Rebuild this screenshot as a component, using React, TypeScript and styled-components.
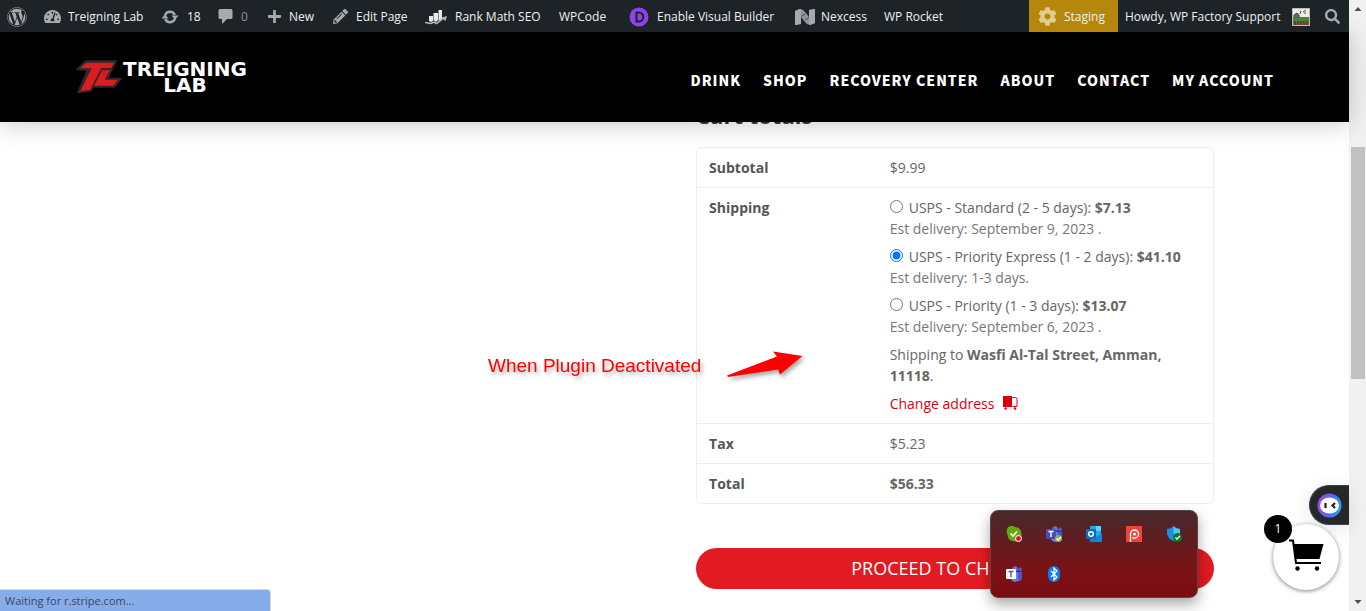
import React from "react";
import styled, { createGlobalStyle } from "styled-components";
import { FaWordpress, FaTachometerAlt, FaPlus, FaSearch, FaCog, FaPencilAlt } from "react-icons/fa";

const Global = createGlobalStyle`
  * { box-sizing: border-box; }
  body { margin: 0; background: #fff; overflow: hidden; font-family: "Open Sans", sans-serif; }
`;

const Window = styled.div`
  display: flex;
  height: 100vh;
  overflow: hidden;
`;
const Page = styled.div`
  flex: 1;
  min-width: 0;
  display: flex;
  flex-direction: column;
`;

/* Admin bar */
const AdminBar = styled.nav`
  display: flex;
  flex: none;
  height: 32px;
  background: #1d2327;
  font: 12px/30px "Open Sans", sans-serif;
  position: relative;
  z-index: 3;
`;
const AdminItem = styled.a<{ $w: number; $dim?: boolean; $gold?: boolean }>`
  display: flex;
  align-items: center;
  flex: none;
  width: ${(p) => p.$w}px;
  padding-left: 7px;
  padding-top: 1px;
  white-space: nowrap;
  text-decoration: none;
  color: ${(p) => (p.$dim ? "#8c9196" : "#f0f0f1")};
  background: ${(p) => (p.$gold ? "#b5870b" : "transparent")};
`;
const IconSlot = styled.span<{ $w: number; $c?: string }>`
  display: flex;
  flex: none;
  align-items: center;
  width: ${(p) => p.$w}px;
  padding-left: 2px;
  color: ${(p) => p.$c || "#a7aaad"};
`;
const Spacer = styled.div`
  flex: 1;
`;
const Avatar = styled.svg`
  flex: none;
  margin-left: auto;
  margin-right: 8px;
`;

/* Site header */
const SiteHeader = styled.header`
  display: flex;
  flex: none;
  align-items: center;
  justify-content: space-between;
  height: 90px;
  padding: 0 75px;
  background: #000;
  position: relative;
  z-index: 2;
  box-shadow: 0 2px 24px rgba(0, 0, 0, 0.22);
`;
const Logo = styled.a`
  display: flex;
  align-items: center;
  color: #fff;
  text-decoration: none;
`;
const LogoText = styled.span`
  font: bold 20px/16px "DejaVu Sans", sans-serif;
  text-align: center;
`;
const Menu = styled.nav`
  display: flex;
  gap: 22px;
  padding-top: 5px;
`;
const MenuLink = styled.a`
  font: 900 14px/20px "Noto Sans CJK SC", sans-serif;
  letter-spacing: 1px;
  color: #fff;
  text-decoration: none;
  white-space: nowrap;
`;

/* Cart */
const Main = styled.main`
  width: 80%;
  margin: -23px auto 0;
  display: flex;
  justify-content: flex-end;
`;
const Totals = styled.section`
  width: 48%;
  display: flex;
  flex-direction: column;
`;
const Heading = styled.h2`
  margin: 0 0 16px;
  font: bold 22px/32px "Open Sans", sans-serif;
  color: #333;
`;
const Table = styled.table`
  width: 100%;
  border: 1px solid #eee;
  border-radius: 5px;
  border-spacing: 0;
  table-layout: fixed;
  font-size: 14px;
  line-height: 21px;
  color: #666;
  tr + tr > * {
    border-top: 1px solid #eee;
  }
`;
const Th = styled.th`
  width: 35%;
  padding: 9px 12px;
  text-align: left;
  vertical-align: top;
  color: #555;
`;
const Td = styled.td`
  padding: 9px 12px;
  vertical-align: top;
`;
const Methods = styled.ul`
  list-style: none;
  margin: 0;
  padding: 0;
`;
const Method = styled.li`
  margin-bottom: 7px;
`;
const Option = styled.label`
  display: flex;
  white-space: pre;
`;
const Radio = styled.input`
  width: 13px;
  height: 13px;
  margin: 3px 6px 0 0;
`;
const Delivery = styled.div`
  color: #777;
`;
const Destination = styled.p`
  margin: 0 0 7px;
`;
const Change = styled.a`
  display: flex;
  gap: 9px;
  color: #d9000d;
  text-decoration: none;
`;
const Checkout = styled.button`
  margin-top: 44px;
  height: 41px;
  padding: 0 0 2px;
  border: 0;
  border-radius: 21px;
  background: #e21a22;
  color: #fff;
  font: 18px/24px "Open Sans", sans-serif;
`;

/* Overlays */
const Note = styled.div`
  position: fixed;
  left: 488px;
  top: 349px;
  display: flex;
  gap: 26px;
  z-index: 4;
  font: 19px/34px "Liberation Sans", sans-serif;
  color: #fe0000;
  text-shadow: 2px 3px 4px rgba(0, 0, 0, 0.35);
  svg {
    filter: drop-shadow(2px 3px 2px rgba(0, 0, 0, 0.35));
  }
`;
const Status = styled.div`
  position: fixed;
  left: 0;
  bottom: 0;
  width: 271px;
  height: 22px;
  padding-left: 5px;
  border: solid #dcdcd6;
  border-width: 1px 1px 0 0;
  border-radius: 0 4px 0 0;
  background: #86ace9;
  color: #3d4663;
  font: 11px/22px "Open Sans", sans-serif;
`;
const Tray = styled.div`
  position: fixed;
  right: 168px;
  bottom: 13px;
  z-index: 5;
  display: grid;
  grid-template-columns: repeat(5, 40px);
  grid-auto-rows: 40px;
  place-items: center;
  padding: 3px;
  border: 1px solid #5d4547;
  border-radius: 8px;
  background: linear-gradient(#482a2c, #601d20 35%, #7c1216 70%, #7a0d11);
  box-shadow: 0 6px 14px rgba(0, 0, 0, 0.35);
`;
const Chat = styled.button`
  position: fixed;
  right: 17px;
  bottom: 86px;
  width: 40px;
  height: 40px;
  padding: 0 0 0 7px;
  display: flex;
  align-items: center;
  border: 1px solid #38445c;
  border-right: 0;
  border-radius: 20px 0 0 20px;
  background: #262827;
  box-shadow: 0 4px 20px rgba(0, 0, 0, 0.1);
`;
const Cart = styled.button`
  position: fixed;
  right: 27px;
  bottom: 21px;
  width: 66px;
  height: 66px;
  padding: 0;
  border: 0;
  border-radius: 50%;
  background: #fff;
  box-shadow: 0 1px 4px rgba(0, 0, 0, 0.5);
`;
const Count = styled.span`
  position: absolute;
  left: -9px;
  top: -9px;
  width: 28px;
  height: 28px;
  border-radius: 50%;
  background: #000;
  color: #fff;
  font: 12px/28px "Open Sans", sans-serif;
`;
const Scrollbar = styled.div`
  flex: none;
  width: 17px;
  padding: 0 1px 0 2px;
  display: flex;
  flex-direction: column;
  justify-content: space-between;
  background: #f1f1f1;
  position: relative;
`;
const Thumb = styled.div`
  position: absolute;
  left: 2px;
  right: 1px;
  top: 24%;
  height: 38%;
  background: #c1c1c1;
`;

const RefreshIcon = () => (
  <svg width="18" height="14" viewBox="0 0 18 14" fill="none" stroke="currentColor" strokeWidth="2.4">
    <path d="M4 5.5A5.2 5.2 0 0 1 13.8 5M14 8.5A5.2 5.2 0 0 1 4.2 9" />
    <path d="M10.5 5.5h7L14 9.7zM.5 8.5h7L4 4.3z" fill="currentColor" stroke="none" />
  </svg>
);
const CommentIcon = () => (
  <svg width="15" height="17" viewBox="0 0 15 17" fill="currentColor">
    <path d="M2 1h11q1.500 0 1.500 1.500v7Q14.500 11 13 11H9l-5 5v-5H2Q.5 11 .5 9.500v-7Q.5 1 2 1z" />
  </svg>
);
const RankIcon = () => (
  <svg width="22" height="16" viewBox="0 0 22 16" fill="#e8e8e8">
    <path d="M4 7h4v5l-2 1-2-1zM8.500 4H13v7l-2 2-2.500-2zM13.500 1H17v9l-3.500 2z" />
    <path d="M0 13.500l6 1 3-1.500 2.500 1.500L19 9" fill="none" stroke="#b5b8bb" strokeWidth="1.500" />
    <path d="M16.500 8.500L22 7l-1.500 5z" fill="#b5b8bb" />
  </svg>
);
const DiviIcon = () => (
  <svg width="20" height="20" viewBox="0 0 20 20">
    <circle cx="10" cy="10" r="9.500" fill="#8f42ec" />
    <path d="M7.500 5.500h2.300a4.500 4.500 0 0 1 0 9H7.500z" fill="none" stroke="#1d2327" strokeWidth="2" />
  </svg>
);
const NexcessIcon = () => (
  <svg width="20" height="16" viewBox="0 0 20 16" fill="#a7aaad">
    <path d="M0 2l5-2q3 0 5 3l4 5V1l6-1v14l-5 2q-3 0-5-3L6 8v7l-6 1z" fill="#8f9498" />
    <path d="M0 2l5-2 1 1v14l-6 1zM14 1l6-1v14l-5 2-1-1z" />
    <path d="M6 7.500L10 5M10 11l4-2.500" stroke="#4a4f54" />
  </svg>
);
const LogoMark = () => (
  <svg width="48" height="36" viewBox="45 42 144 108">
    <path d="M46 75L76 46H172L156 78 147 98H188L164 128H101L94 140 50 145 79 78z" fill="#2a2a2a" />
    <path d="M60 70L79 53H162L154 69H124L90 135 61 138 92 76 94 70zM126 76H150L134 104H174L160 122H102z" fill="#dc1b22" />
  </svg>
);
const AvatarArt = () => (
  <Avatar width="18" height="18" viewBox="0 0 18 18">
    <rect width="18" height="18" fill="#ecebe5" stroke="#8c8f94" />
    <path d="M1 12h16v5H1z" fill="#80603c" />
    <path d="M1 10l3-1h13v4H1z" fill="#49863a" />
    <path d="M3 13v4M6 13v4M9 13v4M12 13v4M15 13v4" stroke="#412b1a" />
    <path d="M2 10V7l3-2 2 2v3M8 6l1-3M11 4l3-2M12 5h2" stroke="#444" fill="#666" />
  </Avatar>
);
const TruckIcon = () => (
  <svg width="15" height="21" viewBox="0 0 15 21">
    <path d="M0 3h9v11H0z" fill="#d9000d" />
    <path d="M9.500 4.500h3q1.500 0 1.500 2v7H9.500" fill="none" stroke="#d9000d" />
    <circle cx="2.500" cy="15.500" r="1.200" fill="#d9000d" />
    <circle cx="12" cy="15.500" r="1.200" fill="#d9000d" />
  </svg>
);
const Arrow = () => (
  <svg width="78" height="32" viewBox="0 0 78 32">
    <path d="M0 26.500L50 7.500 46 2.500 75.500 7 53 25.500 51 20.500 1 28z" fill="#fe0000" />
  </svg>
);
const CartIcon = () => (
  <svg width="36" height="33" viewBox="0 0 36 33">
    <path d="M5 5h30.500l-4 15H8z" />
    <path d="M1 1.500h4l3 22.500h25" fill="none" stroke="#000" strokeWidth="2" />
    <circle cx="9.500" cy="29.500" r="2.200" />
    <circle cx="29" cy="29.500" r="2.200" />
  </svg>
);
const BotIcon = () => (
  <svg width="30" height="25" viewBox="0 0 30 25">
    <defs>
      <linearGradient id="ring" x1="0" y1=".6" x2="1" y2=".8">
        <stop offset="0" stopColor="#9a47f0" />
        <stop offset=".5" stopColor="#5265ff" />
        <stop offset="1" stopColor="#23a8ee" />
      </linearGradient>
    </defs>
    <circle cx="12.500" cy="12.500" r="12" fill="url(#ring)" />
    <ellipse cx="12.500" cy="12.500" rx="9.500" ry="8" fill="#fff" />
    <path d="M8.500 10v5M18 10l-2.500 2.500 2.500 2.500" fill="none" stroke="#222" strokeWidth="2.200" />
  </svg>
);

const Check = ({ x, y, r, c }: { x: number; y: number; r: number; c: string }) => (
  <g>
    <circle cx={x} cy={y} r={r} fill={c} />
    <path d={`M${x - 2} ${y}l1.500 1.500 3-3`} fill="none" stroke="#fff" strokeWidth="1.300" />
  </g>
);
const TeeIcon = ({ box, tee }: { box: string; tee: string }) => (
  <>
    <circle cx="9" cy="3" r="2.700" fill="#6870d8" />
    <circle cx="14" cy="3.500" r="2" fill="#5059c9" />
    <path d="M5 6h11v5q0 4-4 4l-3 1q-4-1-4-4z" fill="#7078dc" />
    <path d="M12 6h4v5q0 3-4 3z" fill="#4d55c0" />
    <rect y="3" width="10" height="10" rx="1" fill={box} />
    <path d="M2.500 5.500h5M5 5.500v5.500" stroke={tee} strokeWidth="1.400" />
  </>
);
const Small = ({ children }: { children: React.ReactNode }) => (
  <svg width="16" height="16" viewBox="0 0 16 16">{children}</svg>
);

const rates = [
  { id: "standard", name: "USPS - Standard (2 - 5 days): ", price: "$7.13", eta: "Est delivery: September 9, 2023 ." },
  { id: "express", name: "USPS - Priority Express (1 - 2 days): ", price: "$41.10", eta: "Est delivery: 1-3 days." },
  { id: "priority", name: "USPS - Priority (1 - 3 days): ", price: "$13.07", eta: "Est delivery: September 6, 2023 ." },
];
const menu = ["DRINK", "SHOP", "RECOVERY CENTER", "ABOUT", "CONTACT", "MY ACCOUNT"];

export default function App() {
  return (
    <Window>
      <Global />
      <Page>
        <AdminBar>
          <AdminItem href="#" $w={35} aria-label="WordPress"><FaWordpress size={20} color="#a7aaad" /></AdminItem>
          <AdminItem href="#" $w={117}><IconSlot $w={26}><FaTachometerAlt size={17} /></IconSlot>Treigning Lab</AdminItem>
          <AdminItem href="#" $w={57}><IconSlot $w={28}><RefreshIcon /></IconSlot>18</AdminItem>
          <AdminItem href="#" $w={49} $dim><IconSlot $w={25}><CommentIcon /></IconSlot>0</AdminItem>
          <AdminItem href="#" $w={66}><IconSlot $w={24}><FaPlus size={15} /></IconSlot>New</AdminItem>
          <AdminItem href="#" $w={92}><IconSlot $w={25}><FaPencilAlt size={15} /></IconSlot>Edit Page</AdminItem>
          <AdminItem href="#" $w={136}><IconSlot $w={32}><RankIcon /></IconSlot>Rank Math SEO</AdminItem>
          <AdminItem href="#" $w={68}>WPCode</AdminItem>
          <AdminItem href="#" $w={166}><IconSlot $w={30}><DiviIcon /></IconSlot>Enable Visual Builder</AdminItem>
          <AdminItem href="#" $w={91}><IconSlot $w={28}><NexcessIcon /></IconSlot>Nexcess</AdminItem>
          <AdminItem href="#" $w={77}>WP Rocket</AdminItem>
          <Spacer />
          <AdminItem href="#" $w={89} $gold><IconSlot $w={28} $c="#e0cc92"><FaCog size={19} /></IconSlot>Staging</AdminItem>
          <AdminItem href="#" $w={200}>Howdy, WP Factory Support<AvatarArt /></AdminItem>
          <AdminItem href="#" $w={31} aria-label="Search"><FaSearch size={15} color="#a7aaad" /></AdminItem>
        </AdminBar>
        <SiteHeader>
          <Logo href="#"><LogoMark /><LogoText>TREIGNING<br />LAB</LogoText></Logo>
          <Menu>{menu.map((m) => <MenuLink href="#" key={m}>{m}</MenuLink>)}</Menu>
        </SiteHeader>
        <Main>
          <Totals>
            <Heading>Cart totals</Heading>
            <Table>
              <tbody>
                <tr><Th scope="row">Subtotal</Th><Td>$9.99</Td></tr>
                <tr>
                  <Th scope="row">Shipping</Th>
                  <Td>
                    <Methods>
                      {rates.map((r) => (
                        <Method key={r.id}>
                          <Option><Radio type="radio" name="rate" defaultChecked={r.id === "express"} />{r.name}<b>{r.price}</b></Option>
                          <Delivery>{r.eta}</Delivery>
                        </Method>
                      ))}
                    </Methods>
                    <Destination>Shipping to <b>Wasfi Al-Tal Street, Amman, 11118</b>.</Destination>
                    <Change href="#">Change address<TruckIcon /></Change>
                  </Td>
                </tr>
                <tr><Th scope="row">Tax</Th><Td>$5.23</Td></tr>
                <tr><Th scope="row">Total</Th><Td><b>$56.33</b></Td></tr>
              </tbody>
            </Table>
            <Checkout type="button">PROCEED TO CHECKOUT</Checkout>
          </Totals>
        </Main>
      </Page>
      <Scrollbar>
        <svg width="14" height="17" viewBox="0 0 14 17" fill="#505050"><path d="M3.500 11L7 7l3.500 4z" /></svg>
        <Thumb />
        <svg width="14" height="17" viewBox="0 0 14 17" fill="#505050"><path d="M3.500 6L7 10l3.500-4z" /></svg>
      </Scrollbar>
      <Note>When Plugin Deactivated<Arrow /></Note>
      <Status>Waiting for r.stripe.com...</Status>
      <Chat type="button" aria-label="Chat"><BotIcon /></Chat>
      <Cart type="button" aria-label="Cart"><CartIcon /><Count>1</Count></Cart>
      <Tray>
        <Small>
          <path d="M4 0q3-.5 5 1 6 0 6.500 7v4q-1 4-5 3.500Q2 16 1.500 9-1 3 4 0z" fill="#62a80f" />
          <path d="M4.500 7.500l2.500 2.500 4-4.500" fill="none" stroke="#fff" strokeWidth="1.600" />
          <circle cx="12.500" cy="12.500" r="3" fill="#e81123" stroke="#fff" />
        </Small>
        <Small><TeeIcon box="#454eb8" tee="#fff" /><Check x={12.5} y={12.5} r={3.5} c="#84b84c" /></Small>
        <Small>
          <path d="M4 0h11v12H4z" fill="#28a8ea" /><path d="M10 0h5v5h-5z" fill="#50d9ff" />
          <path d="M3 9l6 3 7-5v9H4z" fill="#1487d4" />
          <rect y="3" width="10" height="10" rx="1" fill="#0f6cbd" />
          <circle cx="5" cy="8" r="2.300" fill="none" stroke="#fff" strokeWidth="1.400" />
        </Small>
        <Small>
          <path d="M0 0h16v16H0z" fill="#f0443a" />
          <path d="M4.500 16V8a4 4 0 1 1 4 4h-2" fill="none" stroke="#fff" strokeWidth="1.300" />
          <circle cx="8.500" cy="8" r="1.500" fill="#fff" />
        </Small>
        <Small>
          <path d="M1 3q4 0 6.500-3Q10 3 14 3v5q-1 5-6.500 7Q2 13 1 8z" fill="#1b8fe0" />
          <path d="M7.500 0Q10 3 14 3v5H7.500z" fill="#54c4f5" />
          <Check x={11.5} y={11.5} r={4.5} c="#0c7a2c" />
        </Small>
        <Small><TeeIcon box="#fff" tee="#4b53bc" /></Small>
        <Small>
          <rect x="2" width="12" height="16" rx="6" fill="#0a7cf0" />
          <path d="M5 5l6 6-3 3V2l3 3-6 6" fill="none" stroke="#fff" strokeWidth="1.200" />
        </Small>
      </Tray>
    </Window>
  );
}
